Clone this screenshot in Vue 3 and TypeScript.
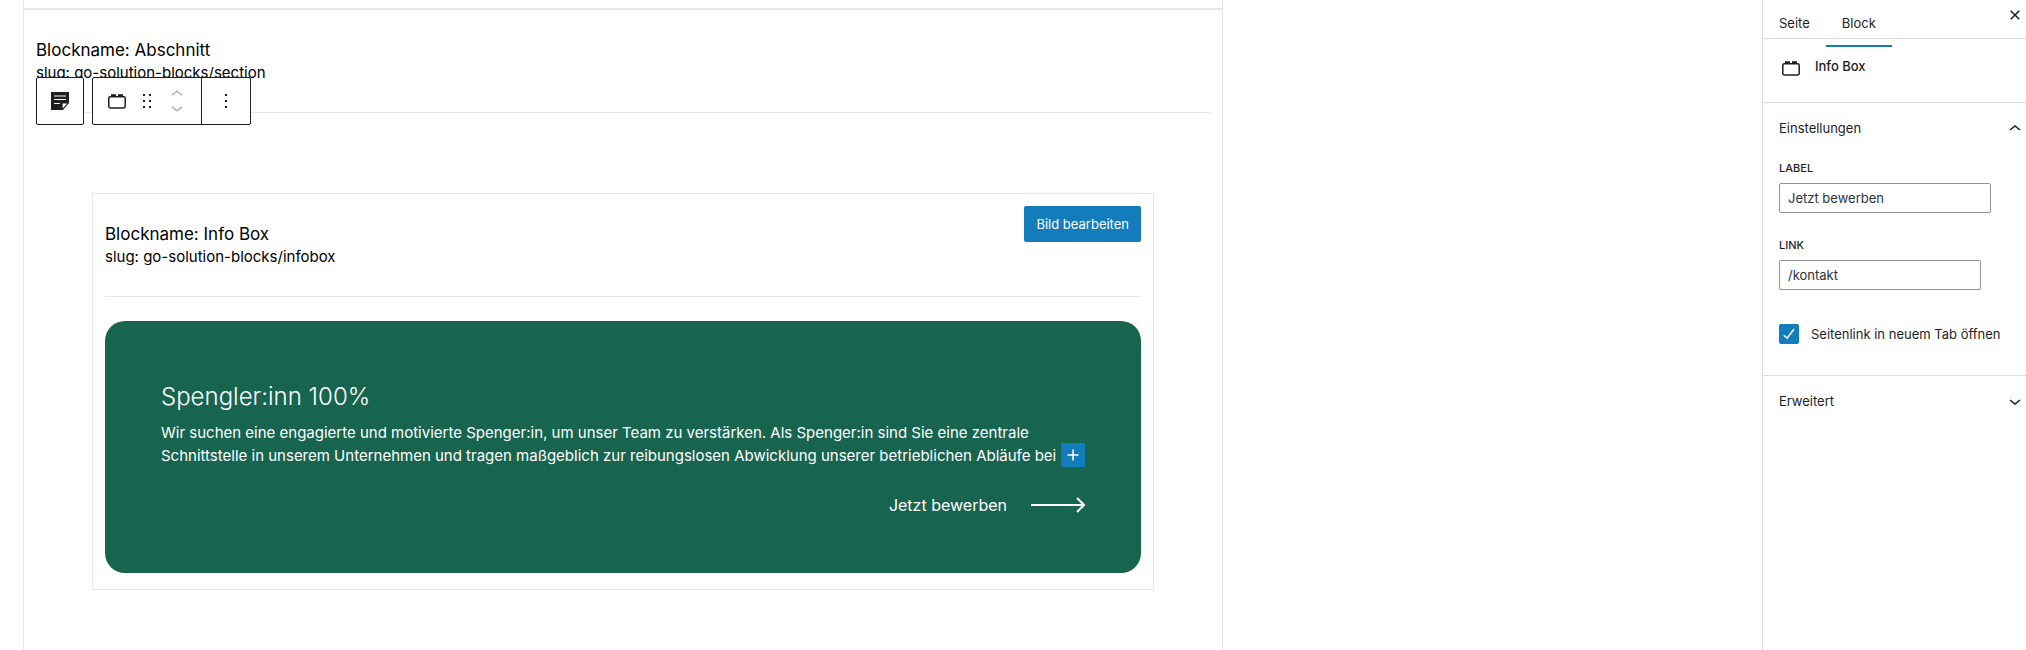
<script setup lang="ts">
import { ref } from 'vue'

const activeTab = ref<'Seite' | 'Block'>('Block')
const tabs = ['Seite', 'Block'] as const
const label = ref('Jetzt bewerben')
const link = ref('/kontakt')
const newTab = ref(true)
const settingsOpen = ref(true)
const advancedOpen = ref(false)
</script>

<template>
  <div class="editor">
    <main class="canvas">
      <div class="previous-block"></div>
      <section class="section-block">
        <header class="block-head section-head">
          <h2 class="block-name">Blockname: Abschnitt</h2>
          <p class="block-slug">slug: go-solution-blocks/section</p>
          <div class="toolbar" role="toolbar" aria-label="Block-Werkzeuge">
            <div class="tool-group">
              <button class="tool parent" type="button" aria-label="Abschnitt auswählen">
                <svg width="18" height="18" viewBox="0 0 18 18">
                  <path d="M0 0h18v11l-6 7H0z" fill="#1e1e1e" />
                  <path d="M3 4h12M3 7.5h12M3 11.5h6" stroke="#fff" stroke-width="1.2" fill="none" />
                  <path d="M11.6 16.4v-4.8h4.6z" fill="#fff" />
                </svg>
              </button>
            </div>
            <div class="tool-group">
              <div class="tool-set">
                <button class="tool" type="button" aria-label="Info Box">
                  <svg width="18" height="15" viewBox="0 0 18 15">
                    <rect x=".8" y="2.8" width="16.4" height="11.2" rx="1.4" fill="none" stroke="#1e1e1e" stroke-width="1.5" />
                    <path d="M3 .2h5v2.8H3zM10 .2h5v2.8h-5z" fill="#1e1e1e" />
                  </svg>
                </button>
                <button class="tool drag" type="button" aria-label="Ziehen">
                  <svg width="8" height="14" viewBox="0 0 8 14" fill="#1e1e1e">
                    <path d="M0 0h2v2H0zM6 0h2v2H6zM0 6h2v2H0zM6 6h2v2H6zM0 12h2v2H0zM6 12h2v2H6z" />
                  </svg>
                </button>
                <div class="movers">
                  <button class="mover" type="button" aria-label="Nach oben" disabled>
                    <svg width="12" height="6" viewBox="0 0 12 6"><path d="M1 5.2l5-4 5 4" fill="none" stroke="#b4b4b4" stroke-width="1.5" /></svg>
                  </button>
                  <button class="mover" type="button" aria-label="Nach unten" disabled>
                    <svg width="12" height="6" viewBox="0 0 12 6"><path d="M1 .8l5 4 5-4" fill="none" stroke="#b4b4b4" stroke-width="1.5" /></svg>
                  </button>
                </div>
              </div>
              <button class="tool more" type="button" aria-label="Optionen">
                <svg width="2" height="14" viewBox="0 0 2 14" fill="#1e1e1e"><path d="M0 0h2v2H0zM0 6h2v2H0zM0 12h2v2H0z" /></svg>
              </button>
            </div>
          </div>
        </header>

        <article class="info-block">
          <header class="block-head info-head">
            <div>
              <h2 class="block-name">Blockname: Info Box</h2>
              <p class="block-slug">slug: go-solution-blocks/infobox</p>
            </div>
            <button class="edit-image" type="button">Bild bearbeiten</button>
          </header>
          <div class="card">
            <h3 class="card-title">Spengler:inn 100%</h3>
            <p class="card-text">
              Wir suchen eine engagierte und motivierte Spenger:in, um unser Team zu verstärken. Als Spenger:in sind Sie eine zentrale<br />
              Schnittstelle in unserem Unternehmen und tragen maßgeblich zur reibungslosen Abwicklung unserer betrieblichen Abläufe bei
              <button class="inserter" type="button" aria-label="Block hinzufügen">
                <svg width="12" height="12" viewBox="0 0 12 12"><path d="M6 .5v11M.5 6h11" stroke="#fff" stroke-width="1.5" /></svg>
              </button>
            </p>
            <a class="card-link" href="#kontakt">
              <span>Jetzt bewerben</span>
              <svg width="54" height="16" viewBox="0 0 54 16"><path d="M0 8h53M46 1l7 7-7 7" fill="none" stroke="#fff" stroke-width="2" /></svg>
            </a>
          </div>
        </article>
      </section>
    </main>

    <aside class="sidebar">
      <div class="tabs" role="tablist">
        <button
          v-for="tab in tabs"
          :key="tab"
          class="tab"
          :class="{ active: tab === activeTab }"
          type="button"
          role="tab"
          :aria-selected="tab === activeTab"
          @click="activeTab = tab"
        >{{ tab }}</button>
        <button class="close" type="button" aria-label="Schließen">
          <svg width="10" height="10" viewBox="0 0 10 10"><path d="M.7.7l8.6 8.6M9.3.7L.7 9.3" stroke="#1e1e1e" stroke-width="1.5" /></svg>
        </button>
      </div>

      <div class="block-card">
        <svg width="18" height="15" viewBox="0 0 18 15">
          <rect x=".8" y="2.8" width="16.4" height="11.2" rx="1.4" fill="none" stroke="#1e1e1e" stroke-width="1.5" />
          <path d="M3 .2h5v2.8H3zM10 .2h5v2.8h-5z" fill="#1e1e1e" />
        </svg>
        <h2>Info Box</h2>
      </div>

      <section class="panel">
        <button class="panel-toggle" type="button" :aria-expanded="settingsOpen" @click="settingsOpen = !settingsOpen">
          <span>Einstellungen</span>
          <svg width="12" height="8" viewBox="0 0 12 8"><path d="M1 6l5-4 5 4" fill="none" stroke="#1e1e1e" stroke-width="1.6" /></svg>
        </button>
        <div v-if="settingsOpen" class="fields">
          <div class="field">
            <label for="field-label">Label</label>
            <input id="field-label" v-model="label" class="text-input wide" type="text" />
          </div>
          <div class="field">
            <label for="field-link">Link</label>
            <input id="field-link" v-model="link" class="text-input" type="text" />
          </div>
          <div class="check">
            <span class="check-box">
              <input id="field-tab" v-model="newTab" type="checkbox" />
              <svg v-if="newTab" width="12" height="12" viewBox="0 0 12 12"><path d="M.8 7.2l3.4 3L11 1" fill="none" stroke="#fff" stroke-width="1.5" /></svg>
            </span>
            <label for="field-tab">Seitenlink in neuem Tab öffnen</label>
          </div>
        </div>
      </section>

      <section class="panel">
        <button class="panel-toggle" type="button" :aria-expanded="advancedOpen" @click="advancedOpen = !advancedOpen">
          <span>Erweitert</span>
          <svg width="12" height="8" viewBox="0 0 12 8"><path d="M1 3l5 4 5-4" fill="none" stroke="#1e1e1e" stroke-width="1.6" /></svg>
        </button>
      </section>
    </aside>
  </div>
</template>

<style>
body {
  background: #fff;
}
</style>

<style scoped>
.editor {
  display: flex;
  min-height: 100vh;
  font-family: Inter, "Liberation Sans", sans-serif;
  color: #1e1e1e;
}
.editor *,
.editor *::before {
  box-sizing: border-box;
}
button {
  padding: 0;
  border: 0;
  background: none;
  font: inherit;
  color: inherit;
  cursor: pointer;
}
svg {
  display: block;
  flex: none;
}
h2,
h3,
p {
  margin: 0;
  font-weight: 400;
}

.canvas {
  flex: 1;
  min-width: 0;
  display: flex;
  flex-direction: column;
  max-width: 1200px;
  margin: 0 auto 0 23px;
  border: solid #e5e7eb;
  border-width: 0 1px;
}
.previous-block {
  height: 10px;
  border-bottom: 2px solid #e5e7eb;
}
.section-block {
  padding: 0 12px;
}
.block-head {
  position: relative;
  border-bottom: 1px solid #e5e7eb;
  color: #000;
}
.section-head {
  padding: 29px 0 28px;
}
.block-name {
  font-size: 17px;
  line-height: 23px;
}
.block-slug {
  font-size: 15px;
  line-height: 22px;
}

/* Floating toolbar of the selected block */
.toolbar {
  position: absolute;
  left: 0;
  top: 67px;
  display: flex;
  gap: 8px;
}
.tool-group {
  display: flex;
  height: 48px;
  border: 1px solid #1e1e1e;
  border-radius: 2px;
  background: #fff;
}
.tool {
  display: flex;
  align-items: center;
  justify-content: center;
  width: 48px;
}
.tool.parent {
  width: 46px;
}
.tool.drag {
  width: 12px;
}
.tool-set {
  display: flex;
  width: 109px;
  border-right: 1px solid #1e1e1e;
}
.movers {
  display: flex;
  flex-direction: column;
  align-items: center;
  justify-content: center;
  gap: 10px;
  width: 48px;
}

.info-block {
  margin: 80px 56px 0;
  padding: 12px;
  padding-bottom: 16px;
  border: 1px solid #e5e7eb;
}
.info-head {
  display: flex;
  justify-content: space-between;
  align-items: flex-start;
  padding-bottom: 28px;
}
.info-head > div {
  padding-top: 17px;
}
.edit-image {
  height: 36px;
  padding: 0 12px;
  border-radius: 2px;
  background: #137dbb;
  color: #fff;
  font-size: 13px;
}
.card {
  margin-top: 24px;
  padding: 56px;
  border-radius: 20px;
  background: #17644f;
  color: #fff;
}
.card-title {
  margin-bottom: 4px;
  font-size: 24px;
  line-height: 40px;
  font-weight: 300;
}
.card-text {
  position: relative;
  font-size: 15px;
  line-height: 23px;
  white-space: nowrap;
}
.inserter {
  position: absolute;
  right: 0;
  bottom: 0;
  display: flex;
  align-items: center;
  justify-content: center;
  width: 24px;
  height: 24px;
  border-radius: 2px;
  background: #137dbb;
}
.card-link {
  display: flex;
  justify-content: flex-end;
  align-items: center;
  gap: 24px;
  margin-top: 26px;
  font-size: 16px;
  line-height: 24px;
  color: #fff;
  text-decoration: none;
}

.sidebar {
  flex: none;
  width: 264px;
  border-left: 1px solid #ddd;
  font-size: 13px;
  line-height: 16px;
}
.tabs {
  display: flex;
  height: 39px;
  border-bottom: 1px solid #ddd;
}
.tab {
  height: 47px;
  padding: 0 16px;
  border-bottom: 2px solid transparent;
}
.tab.active {
  border-color: #137dbb;
}
.close {
  margin: 10px 6px auto auto;
}
.block-card {
  display: flex;
  align-items: flex-start;
  gap: 15px;
  height: 64px;
  padding: 22px 19px;
  border-bottom: 1px solid #ddd;
}
.block-card h2 {
  margin-top: -3px;
  font-size: 13px;
  line-height: 16px;
  font-weight: 500;
}
.panel {
  padding: 0 16px;
  border-bottom: 1px solid #ddd;
}
.panel:last-child {
  border-bottom: 0;
}
.panel-toggle {
  display: flex;
  justify-content: space-between;
  align-items: center;
  width: calc(100% + 11px);
  height: 50px;
}
.fields {
  padding: 8px 0 31px;
}
.field {
  margin-bottom: 25px;
}
.field label {
  display: block;
  margin-bottom: 7px;
  font-size: 11px;
  line-height: 15px;
  font-weight: 500;
  text-transform: uppercase;
}
.text-input {
  display: block;
  width: 202px;
  height: 30px;
  padding: 0 8px;
  border: 1px solid #949494;
  border-radius: 2px;
  background: #fff;
  font: inherit;
  color: #2c3338;
}
.text-input.wide {
  width: 212px;
}
.check {
  display: flex;
  align-items: center;
  gap: 12px;
  padding-top: 9px;
  white-space: nowrap;
}
.check-box {
  display: grid;
  place-items: center;
}
.check-box > * {
  grid-area: 1 / 1;
}
.check-box input {
  appearance: none;
  width: 20px;
  height: 20px;
  margin: 0;
  border: 1px solid #1e1e1e;
  border-radius: 2px;
}
.check-box input:checked {
  border-color: #137dbb;
  background: #137dbb;
}
.check-box svg {
  pointer-events: none;
}
</style>
